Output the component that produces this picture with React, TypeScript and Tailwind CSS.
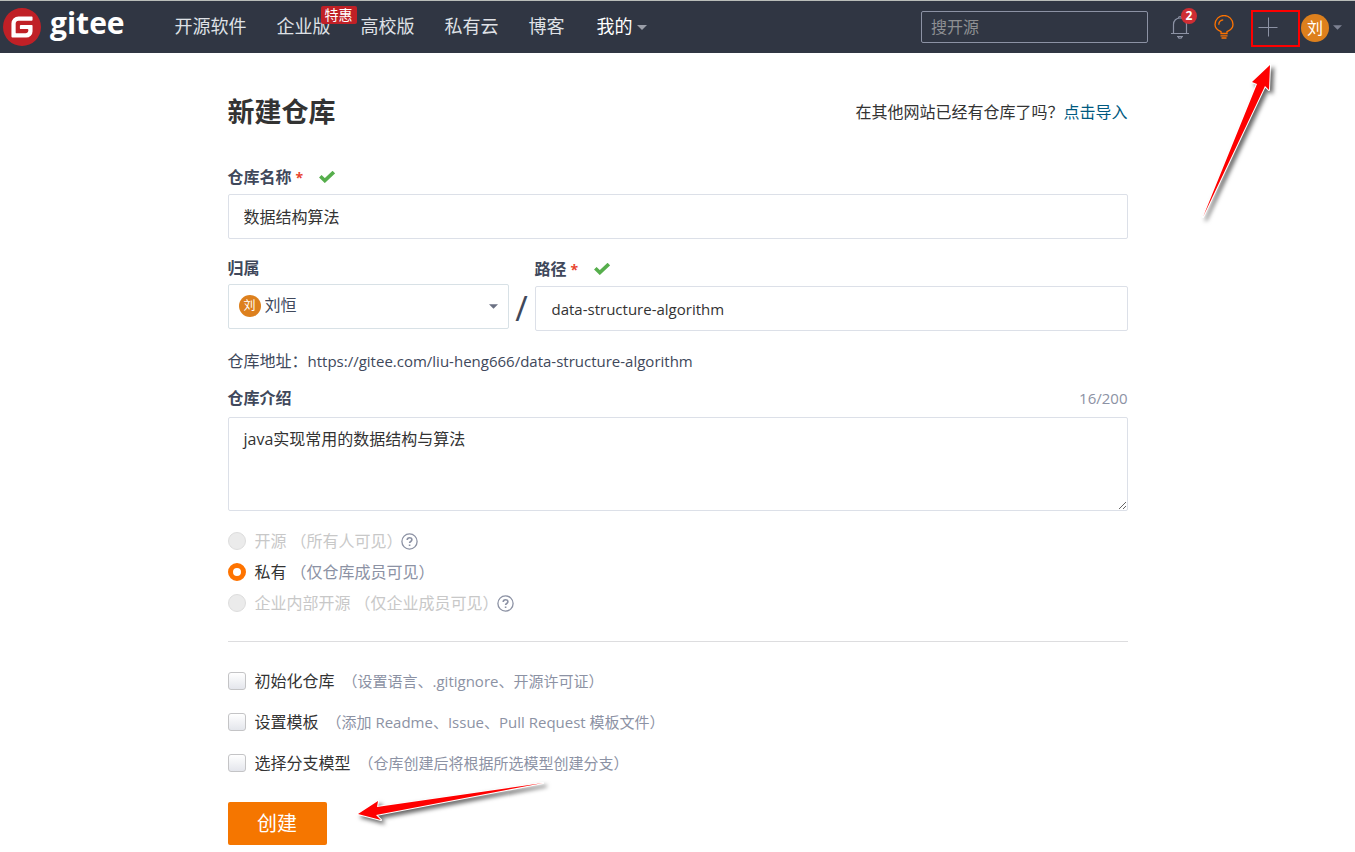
import { useState } from 'react';
import type { ReactNode } from 'react';

const navItems = [
  { label: '开源软件' },
  { label: '企业版', badge: '特惠' },
  { label: '高校版' },
  { label: '私有云' },
  { label: '博客' },
];

const visibilities = [
  { id: 'public', label: '开源', hint: '（所有人可见）', disabled: true, help: true },
  { id: 'private', label: '私有', hint: '（仅仓库成员可见）' },
  { id: 'inner', label: '企业内部开源', hint: '（仅企业成员可见）', disabled: true, help: true },
];

const options = [
  { id: 'init', label: '初始化仓库', hint: '（设置语言、.gitignore、开源许可证）' },
  { id: 'template', label: '设置模板', hint: '（添加 Readme、Issue、Pull Request 模板文件）' },
  { id: 'branch', label: '选择分支模型', hint: '（仓库创建后将根据所选模型创建分支）' },
];

const Logo = () => (
  <a href="#" className="flex items-center text-white">
    <svg className="w-[38px] h-[38px]" viewBox="0 0 24 24">
      <circle cx="12" cy="12" r="11" fill="#fff" />
      <path
        fill="#c02026"
        d="M11.984 0A12 12 0 0 0 0 12a12 12 0 0 0 12 12 12 12 0 0 0 12-12A12 12 0 0 0 12 0a12 12 0 0 0-.016 0zm6.09 5.333c.328 0 .593.266.592.593v1.482a.594.594 0 0 1-.593.592H9.777c-.982 0-1.778.796-1.778 1.778v5.63c0 .327.266.592.593.592h5.63c.982 0 1.778-.796 1.778-1.778v-.296a.593.593 0 0 0-.592-.593h-4.15a.592.592 0 0 1-.592-.592v-1.482a.593.593 0 0 1 .593-.592h6.815c.327 0 .593.265.593.592v3.408a4 4 0 0 1-4 4H5.926a.593.593 0 0 1-.593-.593V9.778a4.444 4.444 0 0 1 4.445-4.444h8.296Z"
      />
    </svg>
    <span className="ml-[9px] pb-2 text-[30px] leading-10 font-bold">gitee</span>
  </a>
);

const Caret = ({ className }: { className: string }) => (
  <svg className={className} viewBox="0 0 10 5" fill="currentColor">
    <path d="M0 0h10L5 5z" />
  </svg>
);

const BellIcon = () => (
  <svg className="w-5 h-6" viewBox="0 0 20 24" fill="none" stroke="#8c92a4" strokeWidth="1.2">
    <path d="M1 18.5h18M3.5 18.5V9.5C3.5 5.5 6.3 3 10 3s6.500 2.500 6.500 6.500v9" />
    <path d="M8.500 3a1.500 1.500 0 0 1 3 0M7 21.500h6M8 21.500c.5 2.300 3.500 2.300 4 0" />
  </svg>
);

const BulbIcon = () => (
  <svg className="w-5 h-6" viewBox="0 0 20 24" fill="none" stroke="#fe7300" strokeWidth="1.300">
    <path d="M7 18.500v-1.800C3.500 15.200 1 13 1 9.500a9 9 0 0 1 18 0c0 3.500-2.500 5.700-6 7.200v1.800z" />
    <path d="M4.800 9.800c0-2.700 1.800-4.600 4.400-4.900M6.500 20.800h7M7.500 23h5" />
  </svg>
);

const CheckIcon = () => (
  <svg className="w-4 h-3" viewBox="0 0 16 12" fill="none" stroke="#56ae4c" strokeWidth="3.600">
    <path d="M1.300 5.300l4.500 4.300 9-8.500" />
  </svg>
);

const HelpIcon = () => (
  <svg className="w-[17px] h-[17px]" viewBox="0 0 17 17" fill="none" stroke="#8c92a4" strokeWidth="1.300">
    <circle cx="8.500" cy="8.500" r="7.600" />
    <path strokeWidth="1.600" d="M6.200 7c0-3 4.700-3 4.700-.2 0 1.700-2.300 1.700-2.300 3.300M8.600 11.400v1.600" />
  </svg>
);

const Avatar = ({ className }: { className: string }) => (
  <span className={`flex items-center justify-center rounded-full bg-[#dd801d] text-white ${className}`}>
    刘
  </span>
);

const Arrow = ({ className, viewBox, d }: { className: string; viewBox: string; d: string }) => (
  <svg
    className={`absolute pointer-events-none overflow-visible drop-shadow-[3px_3px_2px_rgba(0,0,0,0.6)] ${className}`}
    viewBox={viewBox}
  >
    <path d={d} fill="#fe0000" stroke="#fff" strokeWidth="2" strokeLinejoin="round" paintOrder="stroke" />
  </svg>
);

const Label = ({ htmlFor, required, children }: { htmlFor: string; required?: boolean; children: ReactNode }) => (
  <div className="flex items-center h-6">
    <label htmlFor={htmlFor} className="font-bold text-[#40485b]">
      {children}
      {required && <span className="ml-1 text-sm text-[#e8452f]">*</span>}
    </label>
    {required && (
      <span className="ml-4">
        <CheckIcon />
      </span>
    )}
  </div>
);

const Header = () => (
  <header className="relative flex items-center h-[53px] border-t border-[#b9bdb9] bg-[#303643] pl-[3px] pr-[13px]">
    <Logo />
    <nav className="flex items-center gap-[30px] ml-[50px] pb-[2px] text-lg text-[#dfe1e6] whitespace-nowrap">
      {navItems.map((item) => (
        <a key={item.label} href="#" className="relative">
          {item.label}
          {item.badge && (
            <span className="absolute -top-[6px] left-11 rounded-xs bg-[#c02026] px-1 text-sm leading-[18px] text-white">
              {item.badge}
            </span>
          )}
        </a>
      ))}
      <a href="#" className="flex items-center gap-1 ml-[2px] text-white">
        我的
        <Caret className="w-[10px] h-[5px] mt-[2px] text-[#9a9ea8]" />
      </a>
    </nav>
    <div className="flex items-center ml-auto">
      <input
        type="search"
        aria-label="搜开源"
        placeholder="搜开源"
        className="w-[227px] h-8 rounded-xs border border-[#8c92a4] bg-transparent px-[9px] text-white placeholder:text-[#8e9093] outline-none"
      />
      <button type="button" aria-label="通知" className="relative ml-[22px]">
        <BellIcon />
        <span className="absolute -top-[7px] left-[11px] w-4 h-4 rounded-full bg-[#cf2d33] text-xs leading-4 font-bold text-white">
          2
        </span>
      </button>
      <button type="button" aria-label="动态" className="ml-6">
        <BulbIcon />
      </button>
      <button
        type="button"
        aria-label="新建"
        className="flex items-center w-[49px] h-[37px] ml-[17px] mt-[2px] border-2 border-[#fe0000] pl-[5px] pb-[2px]"
      >
        <svg className="w-5 h-5" viewBox="0 0 20 20" stroke="#8c92a4" strokeWidth="1">
          <path d="M.5 10.500h19M10.500 .5v19" />
        </svg>
      </button>
      <button type="button" aria-label="账户" className="flex items-center gap-1 ml-px mt-px">
        <Avatar className="w-7 h-7 text-base" />
        <Caret className="w-[9px] h-[5px] text-[#7d8292]" />
      </button>
    </div>
    <Arrow
      className="right-[82px] top-[62px] w-[72px] h-[160px]"
      viewBox="0 0 72 160"
      d="M2 154L56 21l-5-2L69 2l-1 25-4-4z"
    />
  </header>
);

const App = () => {
  const [name, setName] = useState('数据结构算法');
  const [path, setPath] = useState('data-structure-algorithm');
  const [intro, setIntro] = useState('java实现常用的数据结构与算法');
  const [visibility, setVisibility] = useState('private');

  return (
    <div className="min-h-screen bg-white font-['Open_Sans','Noto_Sans_CJK_SC',sans-serif] text-base text-[#333]">
      <Header />
      <main className="max-w-[900px] mx-auto pt-[39px] pb-1">
        <div className="flex items-center justify-between h-10">
          <h1 className="text-[27px] font-bold">新建仓库</h1>
          <p>
            在其他网站已经有仓库了吗？
            <a href="#" className="text-[#005980]">
              点击导入
            </a>
          </p>
        </div>

        <form onSubmit={(e) => e.preventDefault()}>
          <div className="mt-[33px]">
            <Label htmlFor="name" required>
              仓库名称
            </Label>
            <input
              id="name"
              value={name}
              onChange={(e) => setName(e.target.value)}
              className="block w-full h-[45px] mt-[5px] rounded-xs border border-[#dce0e8] px-[15px] pb-[2px] outline-none"
            />
          </div>

          <div className="flex items-start mt-[17px]">
            <div className="w-[281px] shrink-0">
              <Label htmlFor="owner">归属</Label>
              <div className="relative mt-1">
                <select
                  id="owner"
                  className="block w-full h-[45px] appearance-none rounded-xs border border-[#d8e1e6] bg-white pl-9 pb-1 text-[#40485b] outline-none"
                >
                  <option>刘恒</option>
                </select>
                <Avatar className="absolute left-[11px] top-[11px] w-[22px] h-[22px] text-xs pointer-events-none" />
                <Caret className="absolute right-[11px] top-5 w-[9px] h-[5px] text-[#6b7183] pointer-events-none" />
              </div>
            </div>
            <span className="w-[26px] shrink-0 mt-7 text-center text-[34px] leading-[48px] text-[#40485b]">/</span>
            <div className="grow mt-px">
              <Label htmlFor="path" required>
                路径
              </Label>
              <input
                id="path"
                value={path}
                onChange={(e) => setPath(e.target.value)}
                className="block w-full h-[45px] mt-[5px] rounded-xs border border-[#dce0e8] px-4 text-[15px] outline-none"
              />
            </div>
          </div>

          <p className="mt-[17px] text-[#40485b]">
            仓库地址：<span className="text-[15px]">https://gitee.com/liu-heng666/{path}</span>
          </p>

          <div className="flex items-center justify-between mt-[13px]">
            <Label htmlFor="intro">仓库介绍</Label>
            <span className="text-[15px] text-[#8c92a4]">{intro.length}/200</span>
          </div>
          <textarea
            id="intro"
            value={intro}
            onChange={(e) => setIntro(e.target.value)}
            className="block w-full h-[94px] mt-[7px] rounded-xs border border-[#dce0e8] px-[15px] py-[9px] outline-none"
          />

          <fieldset className="flex flex-col gap-[7px] mt-[18px]">
            {visibilities.map((item) => (
              <div key={item.id} className="flex items-center">
                <input
                  type="radio"
                  id={item.id}
                  name="visibility"
                  disabled={item.disabled}
                  checked={visibility === item.id}
                  onChange={() => setVisibility(item.id)}
                  className="w-[18px] h-[18px] appearance-none rounded-full border border-[#ddd] bg-[#ebebeb] checked:border-[5px] checked:border-[#fe7300] checked:bg-white"
                />
                <label htmlFor={item.id} className={item.disabled ? 'ml-[9px] -mr-[2px] text-[#c8c8c8]' : 'ml-[9px]'}>
                  {item.label}
                  <span className={item.disabled ? 'ml-1' : 'ml-1 text-[#8c92a4]'}>{item.hint}</span>
                </label>
                {item.help && <HelpIcon />}
              </div>
            ))}
          </fieldset>

          <hr className="mt-[26px] border-[#dddddf]" />

          <div className="flex flex-col gap-[17px] mt-[27px]">
            {options.map((item) => (
              <div key={item.id} className="flex items-center">
                <input
                  type="checkbox"
                  id={item.id}
                  className="w-[18px] h-[18px] appearance-none rounded-[3px] border border-[#c4c4c6] bg-linear-to-b from-white to-[#e4e6ec] checked:bg-[#fe7300]"
                />
                <label htmlFor={item.id} className="ml-[9px]">
                  {item.label}
                  <span className="ml-2 text-[15px] text-[#8c92a4]">{item.hint}</span>
                </label>
              </div>
            ))}
          </div>

          <div className="relative mt-[27px]">
            <button type="submit" className="block w-[99px] h-[43px] rounded-xs bg-[#f57600] text-xl text-white">
              创建
            </button>
            <Arrow
              className="left-[126px] -top-[21px] w-[192px] h-[44px]"
              viewBox="0 0 192 44"
              d="M4 33l20-13-1 6L189 2 22 34l5 5z"
            />
          </div>
        </form>
      </main>
    </div>
  );
};

export default App;
